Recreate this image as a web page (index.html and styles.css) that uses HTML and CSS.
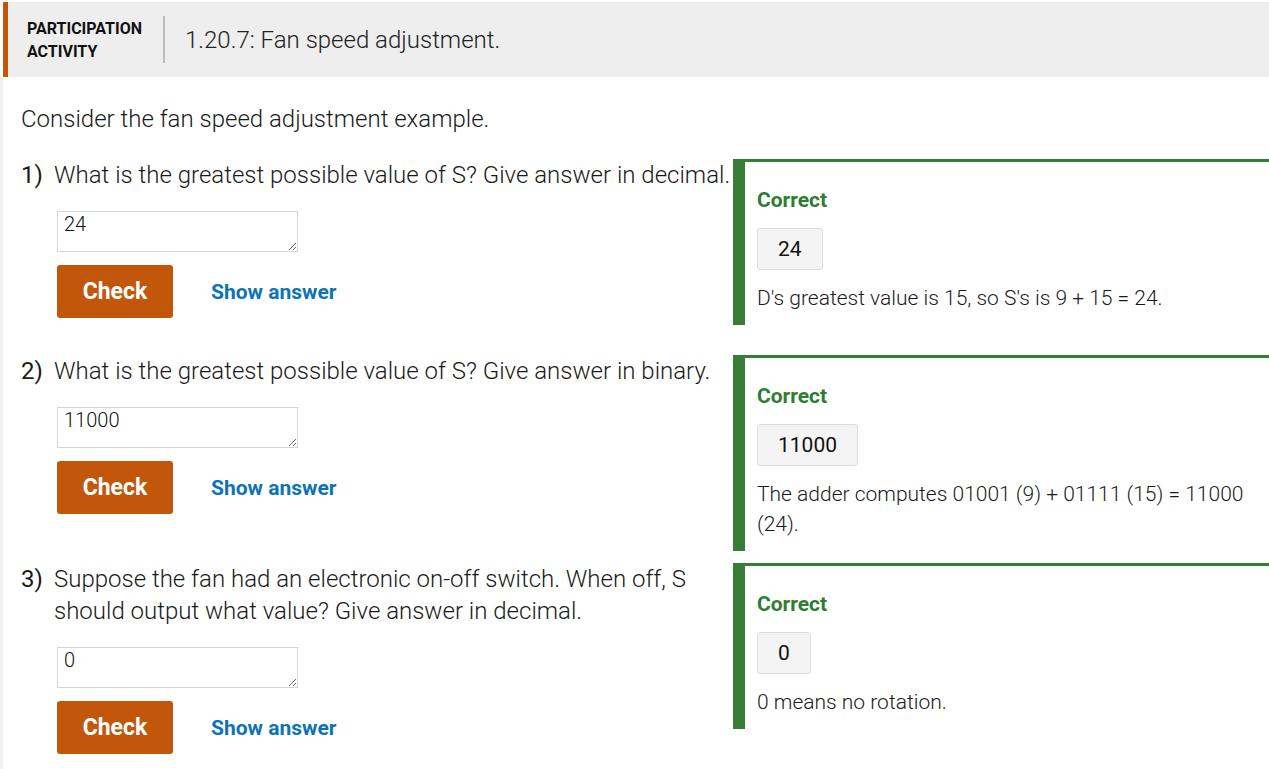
FILE: index.html
```html
<!DOCTYPE html>
<html lang="en">
<head>
<meta charset="utf-8">
<title>Participation activity</title>
<link rel="stylesheet" href="styles.css">
</head>
<body>
<div class="page">
  <div class="header">
    <div class="label">PARTICIPATION<br>ACTIVITY</div>
    <div class="divider"></div>
    <div class="title">1.20.7: Fan speed adjustment.</div>
  </div>
  <div class="content">
    <p class="intro">Consider the fan speed adjustment example.</p>

    <div class="row">
      <div class="left">
        <div class="question"><span class="num">1)</span><span class="qtext">What is the greatest possible value of S? Give answer in decimal.</span></div>
        <div class="answer">
          <textarea class="input">24</textarea>
          <div class="buttons"><button class="check">Check</button><span class="show">Show answer</span></div>
        </div>
      </div>
      <div class="feedback">
        <div class="correct">Correct</div>
        <div class="ansbox">24</div>
        <div class="explain">D's greatest value is 15, so S's is 9 + 15 = 24.</div>
      </div>
    </div>

    <div class="row">
      <div class="left">
        <div class="question"><span class="num">2)</span><span class="qtext">What is the greatest possible value of S? Give answer in binary.</span></div>
        <div class="answer">
          <textarea class="input">11000</textarea>
          <div class="buttons"><button class="check">Check</button><span class="show">Show answer</span></div>
        </div>
      </div>
      <div class="feedback">
        <div class="correct">Correct</div>
        <div class="ansbox">11000</div>
        <div class="explain">The adder computes 01001 (9) + 01111 (15) = 11000 (24).</div>
      </div>
    </div>

    <div class="row">
      <div class="left">
        <div class="question"><span class="num">3)</span><span class="qtext">Suppose the fan had an electronic on-off switch. When off, S should output what value? Give answer in decimal.</span></div>
        <div class="answer">
          <textarea class="input">0</textarea>
          <div class="buttons"><button class="check">Check</button><span class="show">Show answer</span></div>
        </div>
      </div>
      <div class="feedback">
        <div class="correct">Correct</div>
        <div class="ansbox">0</div>
        <div class="explain">0 means no rotation.</div>
      </div>
    </div>
  </div>
</div>
</body>
</html>
```

FILE: styles.css
```css
html, body {
  margin: 0;
  padding: 0;
  background: #fff;
}
body {
  font-family: Roboto, "Liberation Sans", Arial, sans-serif;
  color: #1a1a1a;
  overflow: hidden;
}
.page {
  padding-top: 2px;
}
.header {
  margin-left: 3px;
  height: 75px;
  background: #eeeeee;
  border-left: 5px solid #c2570c;
  display: flex;
  align-items: center;
}
.label {
  margin-left: 19px;
  font-weight: 700;
  font-size: 16px;
  line-height: 23px;
  color: #111;
  width: 136px;
}
.divider {
  width: 2px;
  height: 47px;
  background: #bdbdbd;
}
.title {
  margin-left: 20px;
  font-size: 24px;
  font-weight: 300;
  color: #222;
}
.content {
  border-left: 3px solid #efefef;
  padding: 26px 0 0 18px;
}
.intro {
  margin: 0 0 24px;
  font-size: 24px;
  font-weight: 300;
  line-height: 32px;
}
.row {
  display: flex;
  align-items: flex-start;
  margin-bottom: 12px;
}
.left {
  width: 712px;
  flex: none;
  padding-bottom: 25px;
}
.question {
  display: flex;
  font-size: 24px;
  line-height: 32px;
  font-weight: 300;
}
.num {
  width: 33px;
  flex: none;
  font-weight: 400;
}
.qtext {
  flex: 1;
}
.answer {
  margin-left: 36px;
  padding-top: 20px;
}
.input {
  display: block;
  box-sizing: border-box;
  width: 241px;
  height: 41px;
  border: 1px solid #cfd6dc;
  border-radius: 0;
  padding: 0 6px;
  font-family: Roboto, "Liberation Sans", Arial, sans-serif;
  font-size: 20px;
  font-weight: 300;
  line-height: 24px;
  color: #111;
  background: #fff;
  margin: 0;
}
.buttons {
  display: flex;
  align-items: center;
  margin-top: 13px;
}
.check {
  width: 116px;
  height: 53px;
  border: none;
  border-radius: 3px;
  background: #c2570c;
  color: #fff;
  font-family: Roboto, "Liberation Sans", Arial, sans-serif;
  font-weight: 700;
  font-size: 23px;
  padding: 0;
}
.show {
  margin-left: 38px;
  font-weight: 700;
  font-size: 21px;
  color: #0c74b6;
}
.feedback {
  flex: 1;
  border-top: 3px solid #367e37;
  border-left: 12px solid #367e37;
  padding: 24px 24px 12px 12px;
}
.correct {
  font-weight: 700;
  font-size: 21px;
  line-height: 28px;
  color: #2f7d32;
}
.ansbox {
  display: inline-block;
  margin-top: 14px;
  padding: 6px 20px;
  border: 1px solid #dcdcdc;
  border-radius: 3px;
  background: #f4f4f4;
  font-size: 21px;
  line-height: 28px;
  color: #111;
}
.explain {
  margin-top: 13px;
  font-size: 21px;
  font-weight: 300;
  line-height: 30px;
  color: #1a1a1a;
}
```
